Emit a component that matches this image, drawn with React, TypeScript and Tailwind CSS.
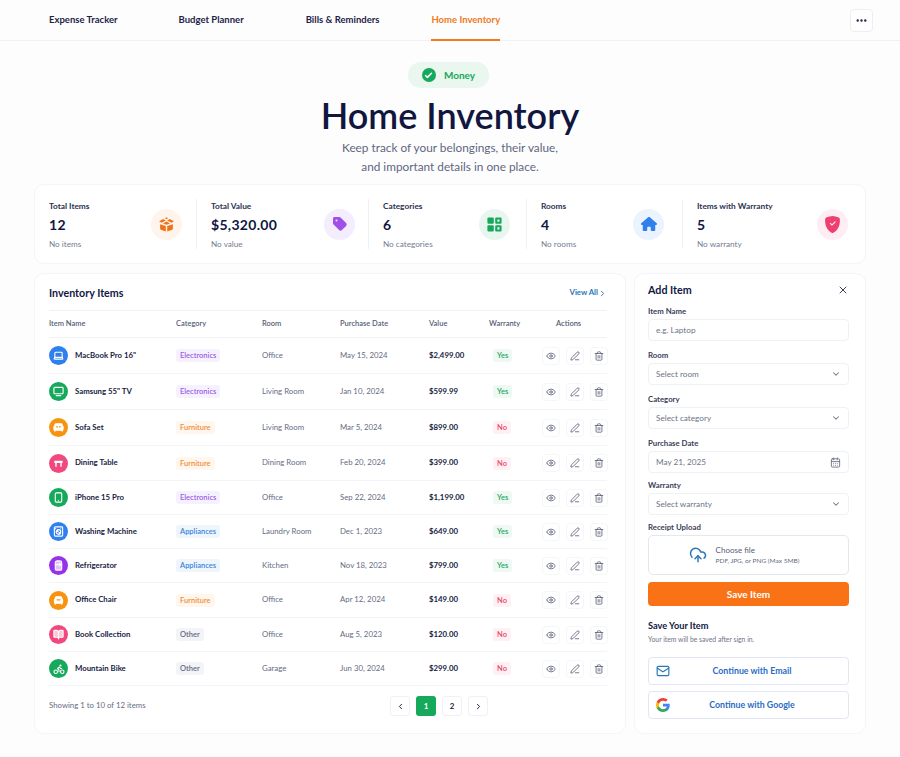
import {
  Armchair,
  Bike,
  BookOpen,
  CalendarDays,
  Check,
  ChevronDown,
  ChevronLeft,
  ChevronRight,
  CloudUpload,
  Eye,
  Laptop,
  Mail,
  MoreHorizontal,
  PenLine,
  Refrigerator,
  Smartphone,
  Sofa,
  Trash2,
  TvMinimal,
  WashingMachine,
  X,
} from "lucide-react";
import { BsShieldFillCheck } from "react-icons/bs";
import { FaHouse, FaTag } from "react-icons/fa6";
import type { ReactNode } from "react";

const navTabs = ["Expense Tracker", "Budget Planner", "Bills & Reminders", "Home Inventory"];

const categoryStyles: Record<string, string> = {
  Electronics: "bg-[#f6f1fe] text-[#9b5de5]",
  Furniture: "bg-[#fff6ed] text-[#f28c38]",
  Appliances: "bg-[#eef5fd] text-[#3b86d8]",
  Other: "bg-[#f3f4f7] text-[#5f6880]",
};

function TableIcon() {
  return (
    <svg viewBox="0 0 24 24" className="h-[11px] w-[11px]" fill="white">
      <path d="M3 6h18v5h-2v8h-3v-8H8v8H5v-8H3z" />
    </svg>
  );
}

function BoxIcon() {
  return (
    <svg viewBox="0 0 24 24" className="h-[17px] w-[17px]" fill="#f0731a">
      <path d="M3 11.500 11 14v8l-7-2.600a1.500 1.500 0 0 1-1-1.400z" />
      <path d="M21 11.500 13 14v8l7-2.600a1.500 1.500 0 0 0 1-1.400z" />
      <path d="M1.500 7.500 7.500 4.200 11 6.300 5 9.700z" />
      <path d="M22.500 7.500 16.500 4.200 13 6.300 19 9.700z" />
      <path d="M12 7.800 17 10.500 12 12.200 7 10.500z" />
      <path d="M9.500 3 12 1.700 14.500 3 12 4.400z" />
    </svg>
  );
}

function GridIcon() {
  return (
    <svg viewBox="0 0 24 24" className="h-[17px] w-[17px]" fill="#16a95b" fillRule="evenodd">
      <path d="M3.500 2h6A1.500 1.500 0 0 1 11 3.500v6A1.500 1.500 0 0 1 9.500 11h-6A1.500 1.500 0 0 1 2 9.500v-6A1.500 1.500 0 0 1 3.500 2z" />
      <path d="M14.500 2h6A1.500 1.500 0 0 1 22 3.500v6a1.500 1.500 0 0 1-1.500 1.500h-6A1.500 1.500 0 0 1 13 9.500v-6A1.500 1.500 0 0 1 14.500 2zM16 5v3h3V5z" />
      <path d="M3.500 13h6a1.500 1.500 0 0 1 1.500 1.500v6A1.500 1.500 0 0 1 9.500 22h-6A1.500 1.500 0 0 1 2 20.500v-6A1.500 1.500 0 0 1 3.500 13z" />
      <path d="M14.500 13h6a1.500 1.500 0 0 1 1.500 1.500v6a1.500 1.500 0 0 1-1.500 1.500h-6a1.500 1.500 0 0 1-1.500-1.500v-6a1.500 1.500 0 0 1 1.500-1.500zM16 16v3h3v-3z" />
    </svg>
  );
}

const items = [
  { name: 'MacBook Pro 16"', icon: <Laptop size={11} strokeWidth={2.4} />, color: "bg-[#2f80ed]", category: "Electronics", room: "Office", date: "May 15, 2024", value: "$2,499.00", warranty: true, height: "h-[36px]" },
  { name: 'Samsung 55" TV', icon: <TvMinimal size={11} strokeWidth={2.4} />, color: "bg-[#16a95b]", category: "Electronics", room: "Living Room", date: "Jan 10, 2024", value: "$599.99", warranty: true, height: "h-[36px]" },
  { name: "Sofa Set", icon: <Sofa size={11} strokeWidth={2.4} className="fill-white" />, color: "bg-[#f7930f]", category: "Furniture", room: "Living Room", date: "Mar 5, 2024", value: "$899.00", warranty: false, height: "h-[36px]" },
  { name: "Dining Table", icon: <TableIcon />, color: "bg-[#f0487f]", category: "Furniture", room: "Dining Room", date: "Feb 20, 2024", value: "$399.00", warranty: false, height: "h-[35px]" },
  { name: "iPhone 15 Pro", icon: <Smartphone size={11} strokeWidth={2.4} />, color: "bg-[#16a95b]", category: "Electronics", room: "Office", date: "Sep 22, 2024", value: "$1,199.00", warranty: true, height: "h-[34px]" },
  { name: "Washing Machine", icon: <WashingMachine size={11} strokeWidth={2.4} />, color: "bg-[#2f80ed]", category: "Appliances", room: "Laundry Room", date: "Dec 1, 2023", value: "$649.00", warranty: true, height: "h-[34px]" },
  { name: "Refrigerator", icon: <Refrigerator size={11} strokeWidth={2.4} className="fill-white/70" />, color: "bg-[#9333ea]", category: "Appliances", room: "Kitchen", date: "Nov 18, 2023", value: "$799.00", warranty: true, height: "h-[34px]" },
  { name: "Office Chair", icon: <Armchair size={11} strokeWidth={2.4} className="fill-white" />, color: "bg-[#f7930f]", category: "Furniture", room: "Office", date: "Apr 12, 2024", value: "$149.00", warranty: false, height: "h-[35px]" },
  { name: "Book Collection", icon: <BookOpen size={11} strokeWidth={2.4} className="fill-white/70" />, color: "bg-[#f0487f]", category: "Other", room: "Office", date: "Aug 5, 2023", value: "$120.00", warranty: false, height: "h-[34px]" },
  { name: "Mountain Bike", icon: <Bike size={12} strokeWidth={2.2} />, color: "bg-[#16a95b]", category: "Other", room: "Garage", date: "Jun 30, 2024", value: "$299.00", warranty: false, height: "h-[34px]" },
];

const rowColumns = "grid grid-cols-[127px_86px_78px_89px_60px_50px_1fr] items-center";

function Stat({ label, value, note, icon, tint, width, inset, last }: { label: string; value: string; note: string; icon: ReactNode; tint: string; width: string; inset: string; last?: boolean }) {
  return (
    <div className={`flex items-center justify-between pl-[14px] ${width}`}>
      <div className={`flex h-[50px] flex-1 items-center justify-between ${inset} ${last ? "" : "border-r border-[#f0f1f5]"}`}>
        <div className="pt-[2px]">
          <p className="text-[8.3px] leading-[12px] font-bold text-[#2c3350]">{label}</p>
          <p className="mt-[4px] text-[14px] leading-[18px] font-bold tracking-[0.3px] text-[#11163f]">{value}</p>
          <p className="mt-[4px] text-[8.2px] leading-[12px] text-[#757c93]">{note}</p>
        </div>
        <div className={`flex h-[31px] w-[31px] shrink-0 items-center justify-center rounded-full ${tint}`}>{icon}</div>
      </div>
    </div>
  );
}

function FieldLabel({ children }: { children: ReactNode }) {
  return <p className="text-[7.8px] leading-[12px] font-bold text-[#3a4059]">{children}</p>;
}

function Field({ label, text, icon, labelGap }: { label: string; text: string; icon?: ReactNode; labelGap: string }) {
  return (
    <div className={labelGap}>
      <FieldLabel>{label}</FieldLabel>
      <div className="mt-[2px] flex h-[22px] items-center justify-between rounded-[4px] border border-[#f0f1f5] bg-white pr-[7px] pl-[7px] text-[8.2px] text-[#6e7489]">
        <span>{text}</span>
        {icon}
      </div>
    </div>
  );
}

function GoogleLogo() {
  return (
    <svg viewBox="0 0 24 24" className="h-[14px] w-[14px]">
      <path fill="#4285F4" d="M23.500 12.300c0-.8-.1-1.600-.2-2.300H12v4.500h6.500c-.3 1.500-1.100 2.700-2.400 3.600v3h3.900c2.300-2.100 3.500-5.200 3.500-8.800z" />
      <path fill="#34A853" d="M12 24c3.200 0 6-1.100 8-2.900l-3.900-3c-1.100.7-2.500 1.200-4.100 1.200-3.100 0-5.800-2.100-6.700-5H1.300v3.100C3.300 21.300 7.300 24 12 24z" />
      <path fill="#FBBC05" d="M5.300 14.300c-.5-1.500-.5-3.100 0-4.600V6.600h-4c-1.700 3.300-1.700 7.500 0 10.800z" />
      <path fill="#EA4335" d="M12 4.800c1.800 0 3.400.6 4.600 1.800L20 3.200C18 1.200 15.200 0 12 0 7.300 0 3.300 2.700 1.300 6.600l4 3.100c.9-2.900 3.600-4.900 6.700-4.900z" />
    </svg>
  );
}

export default function App() {
  return (
    <div className="min-h-[757px] bg-[#fdfdfe] font-['Lato','Noto_Sans',sans-serif]">
      <header className="flex h-[41px] items-center justify-between border-b border-[#f0f1f4] pr-[27px] pl-[49px]">
        <nav className="flex h-full">
          {navTabs.map((tab, i) => (
            <a
              key={tab}
              className={`relative flex h-[41px] items-center text-[9.5px] font-bold ${i === 0 ? "mr-[61px]" : i === 1 ? "mr-[62px]" : i === 2 ? "mr-[52px]" : ""} ${tab === "Home Inventory" ? "border-y-2 border-t-transparent border-b-[#f07a1c] text-[#f07a1c]" : "text-[#1d2347]"}`}
            >
              {tab}
            </a>
          ))}
        </nav>
        <button className="flex h-[23px] w-[23px] items-center justify-center rounded-[4px] border border-[#eceef2] bg-white text-[#1d2347]">
          <MoreHorizontal size={13} strokeWidth={2.5} />
        </button>
      </header>

      <section className="flex flex-col items-center pt-[21px]">
        <div className="mr-[3px] flex h-[26px] w-[81px] items-center justify-center gap-[8px] rounded-full bg-[#e9f7ef]">
          <span className="flex h-[14px] w-[14px] items-center justify-center rounded-full bg-[#16a95b] text-white">
            <Check size={9} strokeWidth={4} />
          </span>
          <span className="text-[10px] font-bold text-[#16a95b]">Money</span>
        </div>
        <h1 className="mt-[5px] text-[36px] leading-[44px] font-semibold text-[#11163f]">Home Inventory</h1>
        <p className="mt-[1px] text-center text-[11.8px] leading-[19px] text-[#5f667f]">
          Keep track of your belongings, their value,
          <br />
          and important details in one place.
        </p>
      </section>

      <section className="mx-[34px] mt-[8px] flex h-[80px] items-center rounded-[10px] border border-[#f4f5f8] bg-white">
        <Stat label="Total Items" value="12" note="No items" tint="bg-[#fff4ec]" width="w-[162px]" inset="pr-[14px]" icon={<BoxIcon />} />
        <Stat label="Total Value" value="$5,320.00" note="No value" tint="bg-[#f3edfd]" width="w-[172px]" inset="pr-[13px]" icon={<FaTag className="text-[#a04fe8]" size={16} />} />
        <Stat label="Categories" value="6" note="No categories" tint="bg-[#e9f6ef]" width="w-[158px]" inset="pr-[16px]" icon={<GridIcon />} />
        <Stat label="Rooms" value="4" note="No rooms" tint="bg-[#ebf3fe]" width="w-[156px]" inset="pr-[18px]" icon={<FaHouse className="text-[#2f80ed]" size={16} />} />
        <Stat last label="Items with Warranty" value="5" note="No warranty" tint="bg-[#feeef3]" width="flex-1" inset="pr-[17px]" icon={<BsShieldFillCheck className="text-[#ee3f73]" size={17} />} />
      </section>

      <div className="mx-[34px] mt-[9px] flex h-[461px] gap-[8px]">
        <section className="w-[592px] rounded-[10px] border border-[#f4f5f8] bg-white pr-[18px] pl-[14px]">
          <div className="flex h-[37px] items-center justify-between border-b border-[#f1f2f5] pt-[2px]">
            <h2 className="text-[10.7px] font-bold text-[#11163f]">Inventory Items</h2>
            <a className="flex items-center text-[7.8px] font-bold text-[#2878b8]">
              View All <ChevronRight size={9} strokeWidth={2.5} />
            </a>
          </div>
          <div className={`${rowColumns} h-[27px] border-b border-[#f1f2f5] text-[7.5px] font-semibold text-[#555c75]`}>
            <span>Item Name</span>
            <span>Category</span>
            <span>Room</span>
            <span>Purchase Date</span>
            <span>Value</span>
            <span>Warranty</span>
            <span className="pl-[17px]">Actions</span>
          </div>
          {items.map((item) => (
            <div key={item.name} className={`${rowColumns} ${item.height} border-b border-[#f3f4f7]`}>
              <div className="flex items-center gap-[7px]">
                <span className={`flex h-[19px] w-[19px] items-center justify-center rounded-full text-white ${item.color}`}>{item.icon}</span>
                <span className="text-[7.8px] font-bold text-[#171c42]">{item.name}</span>
              </div>
              <div className="flex">
                <span className={`rounded-[3px] px-[4px] py-[2px] text-[7.5px] leading-[9px] font-semibold ${categoryStyles[item.category]}`}>{item.category}</span>
              </div>
              <span className="text-[7.8px] text-[#656c84]">{item.room}</span>
              <span className="text-[7.8px] text-[#656c84]">{item.date}</span>
              <span className="text-[7.8px] font-bold text-[#171c42]">{item.value}</span>
              <div className="flex pl-[4px]">
                <span className={`rounded-[3px] px-[4px] py-[2px] text-[7.5px] leading-[9px] font-semibold ${item.warranty ? "bg-[#edf9f2] text-[#22a861]" : "bg-[#fff0f4] text-[#e8476f]"}`}>{item.warranty ? "Yes" : "No"}</span>
              </div>
              <div className="flex items-center gap-[6px] pl-[3px] text-[#5d6379]">
                {[<Eye key="view" size={10} />, <PenLine key="edit" size={10} />, <Trash2 key="delete" size={10} />].map((icon) => (
                  <span key={icon.key} className="flex h-[18px] w-[18px] items-center justify-center rounded-[4px] border border-[#f5f6f8]">{icon}</span>
                ))}
              </div>
            </div>
          ))}
          <div className="relative flex h-[40px] items-center">
            <span className="text-[7.8px] text-[#656c84]">Showing 1 to 10 of 12 items</span>
            <div className="absolute top-[10px] left-[341px] flex gap-[6px] text-[8px] font-bold text-[#171c42]">
              <span className="flex h-[20px] w-[20px] items-center justify-center rounded-[3px] border border-[#f0f1f4]"><ChevronLeft size={9} strokeWidth={2.5} /></span>
              <span className="flex h-[20px] w-[20px] items-center justify-center rounded-[3px] bg-[#16a95b] text-white">1</span>
              <span className="flex h-[20px] w-[20px] items-center justify-center rounded-[3px] border border-[#f0f1f4]">2</span>
              <span className="flex h-[20px] w-[20px] items-center justify-center rounded-[3px] border border-[#f0f1f4]"><ChevronRight size={9} strokeWidth={2.5} /></span>
            </div>
          </div>
        </section>

        <aside className="flex-1 rounded-[10px] border border-[#f4f5f8] bg-white pt-[8px] pr-[16px] pl-[13px]">
          <div className="flex h-[16px] items-center justify-between">
            <h2 className="text-[10.7px] font-bold text-[#11163f]">Add Item</h2>
            <X size={12} className="text-[#3a4059]" />
          </div>
          <Field labelGap="mt-[7px]" label="Item Name" text="e.g. Laptop" />
          <Field labelGap="mt-[8px]" label="Room" text="Select room" icon={<ChevronDown size={10} strokeWidth={2.5} />} />
          <Field labelGap="mt-[8px]" label="Category" text="Select category" icon={<ChevronDown size={10} strokeWidth={2.5} />} />
          <Field labelGap="mt-[8px]" label="Purchase Date" text="May 21, 2025" icon={<CalendarDays size={11} />} />
          <Field labelGap="mt-[6px]" label="Warranty" text="Select warranty" icon={<ChevronDown size={10} strokeWidth={2.5} />} />
          <div className="mt-[6px]">
            <FieldLabel>Receipt Upload</FieldLabel>
            <div className="mt-[2px] flex h-[40px] items-center justify-center gap-[9px] rounded-[5px] border border-[#e5e7ee] pr-[9px]">
              <CloudUpload size={18} className="text-[#2878b8]" />
              <div>
                <p className="text-[8px] leading-[11px] text-[#555c75]">Choose file</p>
                <p className="text-[6.5px] leading-[10px] text-[#656c84]">PDF, JPG, or PNG (Max 5MB)</p>
              </div>
            </div>
          </div>
          <button className="mt-[7px] h-[24px] w-full rounded-[4px] bg-[#f97316] text-[10px] font-bold text-white">Save Item</button>
          <h3 className="mt-[13px] text-[9.2px] leading-[13px] font-bold text-[#11163f]">Save Your Item</h3>
          <p className="mt-[2px] text-[6.8px] leading-[10px] text-[#6e7489]">Your item will be saved after sign in.</p>
          <button className="relative mt-[13px] flex h-[28px] w-full items-center justify-center rounded-[4px] border border-[#e3e7f3] bg-white pl-[7px] text-[8.8px] font-bold text-[#2b6cc4]">
            <Mail size={14} className="absolute left-[7px] text-[#2878b8]" />
            Continue with Email
          </button>
          <button className="relative mt-[6px] flex h-[28px] w-full items-center justify-center rounded-[4px] border border-[#e3e7f3] bg-white pl-[7px] text-[8.8px] font-bold text-[#2b6cc4]">
            <span className="absolute left-[7px]"><GoogleLogo /></span>
            Continue with Google
          </button>
        </aside>
      </div>
    </div>
  );
}
